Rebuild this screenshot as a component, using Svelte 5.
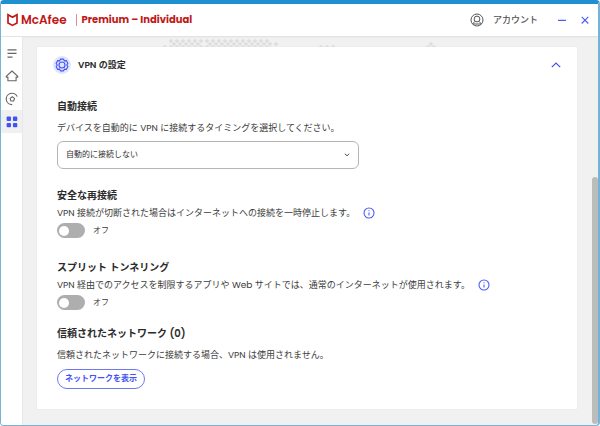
<script>
  let open = $state(true);
  let reconnect = $state(false);
  let split = $state(false);

  const row = (from, to, y) => {
    const out = [];
    for (let x = from; x <= to; x += 6) out.push([x, y]);
    return out;
  };
  // Dotted world map peeking out behind the card
  const dots = [
    ...row(148, 244, 4),
    ...row(151, 253, 7),
    ...row(142, 142, 10),
    ...row(148, 244, 10),
    ...row(298, 310, 10),
    ...row(408, 408, 7),
    ...row(405, 411, 10)
  ].filter(([x, y]) => !(y === 7 && x === 181));
</script>

{#snippet info()}
  <button class="info" aria-label="詳細情報">
    <svg width="12" height="12" viewBox="0 0 12 12" fill="none" stroke="#4c5cf5">
      <circle cx="6" cy="6" r="5" stroke-width="1.1" />
      <path d="M6 5.4v3.1M6 3.2v1.1" stroke-width="1.1" />
    </svg>
  </button>
{/snippet}

<div class="window">
  <header>
    <div class="brand">
      <svg width="11" height="14" viewBox="0 0 11 14" fill="none" stroke="#c01818" stroke-width="1.7">
        <path d="M1 1.8v8.3l4.5 2.3 4.5-2.3V1.8L5.5 4.3z" />
      </svg>
      <span class="logo">McAfee</span>
      <span class="product">Premium – Individual</span>
    </div>
    <button class="account">
      <svg width="14" height="14" viewBox="0 0 14 14" fill="none" stroke="#555" stroke-width="1">
        <circle cx="7" cy="7" r="6" />
        <circle cx="7" cy="6" r="2.9" />
        <path d="M3 11.3c.3-1.5 1.1-2.4 2.2-2.9M11 11.3c-.3-1.5-1.1-2.4-2.2-2.9M3.6 11h6.8" />
      </svg>
      <span>アカウント</span>
    </button>
    <button class="win" aria-label="最小化">
      <svg width="8" height="8" viewBox="0 0 8 8" stroke="#4c5cf5" stroke-width="1.2"><path d="M0 4.4h8" /></svg>
    </button>
    <button class="win" aria-label="閉じる">
      <svg width="8" height="8" viewBox="0 0 8 8" stroke="#4c5cf5" stroke-width="1.1"><path d="M.7.9l6.6 6.6M7.3.9L.7 7.5" /></svg>
    </button>
  </header>

  <div class="body">
    <nav>
      <a href="#menu" aria-label="メニュー">
        <svg width="14" height="14" viewBox="0 0 14 14" stroke="#666" stroke-width="1.1"><path d="M2.5 3.9h9M2.5 7.4h9M2.5 11.1h5" /></svg>
      </a>
      <a href="#home" aria-label="ホーム">
        <svg width="14" height="14" viewBox="0 0 14 14" fill="none" stroke="#666" stroke-width="1.1" stroke-linejoin="round"><path d="M7 2L1.2 7.4v.7h1.7v3.6h8.2V8.1h1.7v-.7z" /></svg>
      </a>
      <a href="#protection" aria-label="保護">
        <svg width="14" height="14" viewBox="0 0 14 14" fill="none" stroke="#666" stroke-width="1.1">
          <path d="M7.2 12.6A5.7 5.7 0 1 1 12.2 4.6" />
          <path d="M7.3 4.8l2.2 1.6-.8 2.6H5.9l-.8-2.6z" />
        </svg>
      </a>
      <a href="#apps" class="active" aria-label="アプリ">
        <svg width="14" height="14" viewBox="0 0 14 14" fill="#4252f5">
          <rect x="1.6" y="1.6" width="4.4" height="4.4" rx="1" /><rect x="7.9" y="1.6" width="4.4" height="4.4" rx="1" />
          <rect x="1.6" y="7.9" width="4.4" height="4.4" rx="1" /><rect x="7.9" y="7.9" width="4.4" height="4.4" rx="1" />
        </svg>
      </a>
    </nav>

    <main>
      <svg class="map" width="440" height="14" viewBox="0 0 440 14" fill="#dedede" aria-hidden="true">
        {#each dots as [x, y]}
          <path d="M{x - 2.3} {y}l2.3-2.3 2.3 2.3-2.3 2.3z" />
        {/each}
      </svg>
      <div class="card">
        <div class="card-head">
          <svg width="18" height="18" viewBox="0 0 18 18" fill="none" stroke="#4252f5" stroke-width="1.1">
            <circle cx="9" cy="9" r="9" fill="#dfe5fc" stroke="none" />
            <circle cx="9" cy="9" r="3" />
            <path stroke-linejoin="round" d="M7.4 3.1h3.2l.7 1.8 2-.3 1.6 2.8L13.7 9l1.2 1.6-1.6 2.8-2-.3-.7 1.8H7.4l-.7-1.8-2 .3-1.6-2.8L4.3 9 3.1 7.4l1.6-2.8 2 .3z" />
          </svg>
          <h1>VPN の設定</h1>
          <button class="toggle-card" aria-label="折りたたむ" aria-expanded={open} onclick={() => (open = !open)}>
            <svg width="10" height="6" viewBox="0 0 10 6" fill="none" stroke="#4252f5" stroke-width="1.2"><path d="M.8 5.2L5 1l4.2 4.2" /></svg>
          </button>
        </div>

        {#if open}
          <section>
            <h2><label for="auto">自動接続</label></h2>
            <p class="lead">デバイスを自動的に VPN に接続するタイミングを選択してください。</p>
            <div class="select">
              <select id="auto"><option>自動的に接続しない</option></select>
              <svg width="6" height="4" viewBox="0 0 6 4" fill="none" stroke="#555"><path d="M.8.8L3 2.8 5.2.8" /></svg>
            </div>
          </section>

          <section class="reconnect">
            <h2>安全な再接続</h2>
            <p>VPN 接続が切断された場合はインターネットへの接続を一時停止します。{@render info()}</p>
            <label class="switch"><input type="checkbox" bind:checked={reconnect} /><span>{reconnect ? 'オン' : 'オフ'}</span></label>
          </section>

          <section class="split">
            <h2>スプリット トンネリング</h2>
            <p>VPN 経由でのアクセスを制限するアプリや Web サイトでは、通常のインターネットが使用されます。{@render info()}</p>
            <label class="switch"><input type="checkbox" bind:checked={split} /><span>{split ? 'オン' : 'オフ'}</span></label>
          </section>

          <section class="trusted">
            <h2>信頼されたネットワーク (0)</h2>
            <p class="lead">信頼されたネットワークに接続する場合、VPN は使用されません。</p>
            <button class="pill">ネットワークを表示</button>
          </section>
        {/if}
      </div>
      <div class="scroll"></div>
    </main>
  </div>
</div>

<style>
  :global(body) { background: #fff; }
  :global(*) { box-sizing: border-box; }
  .window {
    min-height: 100vh;
    display: flex;
    flex-direction: column;
    border: 1px solid #77b3d6;
    border-right-width: 2px;
    border-top: 4px solid #1e90cf;
    border-radius: 4px;
    overflow: hidden;
    background: #f1f1f1;
    color: #3c3c3c;
    font: 9px/14px Poppins, "Noto Sans CJK JP", sans-serif;
  }
  button { font: inherit; color: inherit; background: none; border: 0; padding: 0; cursor: pointer; }
  svg { display: block; flex: none; }
  header {
    height: 33px;
    display: flex;
    align-items: center;
    background: #fff;
    border-bottom: 1px solid #e4e4e4;
    padding: 0 9px 0 6px;
  }
  .brand { display: flex; align-items: center; flex: 1; color: #c01818; font-family: Poppins, Inter, sans-serif; font-weight: 600; }
  .logo { font-size: 12px; margin-left: 3px; }
  .product { font-size: 10px; font-weight: 700; border-left: 1px solid #dc8f8f; margin-left: 9px; padding-left: 5px; line-height: 12px; }
  .account { display: flex; align-items: center; gap: 9px; font-weight: 500; color: #555; margin-right: 20px; }
  .win + .win { margin-left: 15px; }
  .body { flex: 1; display: grid; grid-template-columns: 22px minmax(0, 1fr); }
  nav { background: #fff; padding-top: 4px; border-right: 1px solid #e8e8e8; }
  nav a { height: 23px; display: flex; align-items: center; justify-content: center; }
  nav a.active { background: #f0f0f0; }
  main { position: relative; padding: 10px 21px 16px 14px; box-shadow: inset 0 1px 0 #ebebeb; }
  .map { position: absolute; left: 0; top: 0; }
  .card { position: relative; height: 100%; background: #fff; padding: 8px 16px 20px; box-shadow: 0 0 1px #ddd; }
  .card-head { display: flex; align-items: center; gap: 7px; height: 20px; }
  h1 { margin: 0; flex: 1; font-size: 9px; font-weight: 600; color: #2b2b2b; }
  .toggle-card { padding: 2px 0; }
  section { padding-left: 4px; }
  h2 { margin: 24px 0 0; font-size: 10px; line-height: 16px; font-weight: 600; color: #2b2b2b; }
  p { margin: 2px 0 0; display: flex; align-items: center; gap: 8px; }
  p.lead { margin-top: 6px; }
  .select { position: relative; width: 56%; min-width: 302px; margin-top: 6px; }
  select {
    appearance: none;
    width: 100%;
    height: 28px;
    padding: 0 8px;
    border: 1px solid #b5b5b5;
    border-radius: 6px;
    background: #fff;
    color: #333;
    font: 8px/14px Poppins, "Noto Sans CJK JP", sans-serif;
  }
  .select svg { position: absolute; right: 9px; top: 12px; pointer-events: none; }
  .reconnect h2 { margin-top: 19px; }
  .split h2 { margin-top: 22px; }
  .trusted h2 { margin-top: 16px; }
  .switch { display: flex; align-items: center; gap: 8px; font-size: 8px; width: max-content; margin-top: 3px; }
  input {
    appearance: none;
    display: flex;
    align-items: center;
    width: 28px;
    height: 15px;
    margin: 0;
    padding: 2px;
    border-radius: 8px;
    background: #aeaeae;
  }
  input::before { content: ""; width: 10px; height: 10px; border-radius: 50%; background: #fff; }
  input:checked { background: #4252f5; justify-content: flex-end; }
  .pill {
    display: block;
    margin-top: 7px;
    height: 20px;
    padding: 0 7px;
    border: 1px solid #6b79f7;
    border-radius: 10px;
    color: #4252f5;
    font-size: 8px;
    font-weight: 700;
  }
  .scroll { position: absolute; right: 0; top: 36%; bottom: 1px; width: 6px; border-radius: 3px; background: #bcbcbc; }
</style>
